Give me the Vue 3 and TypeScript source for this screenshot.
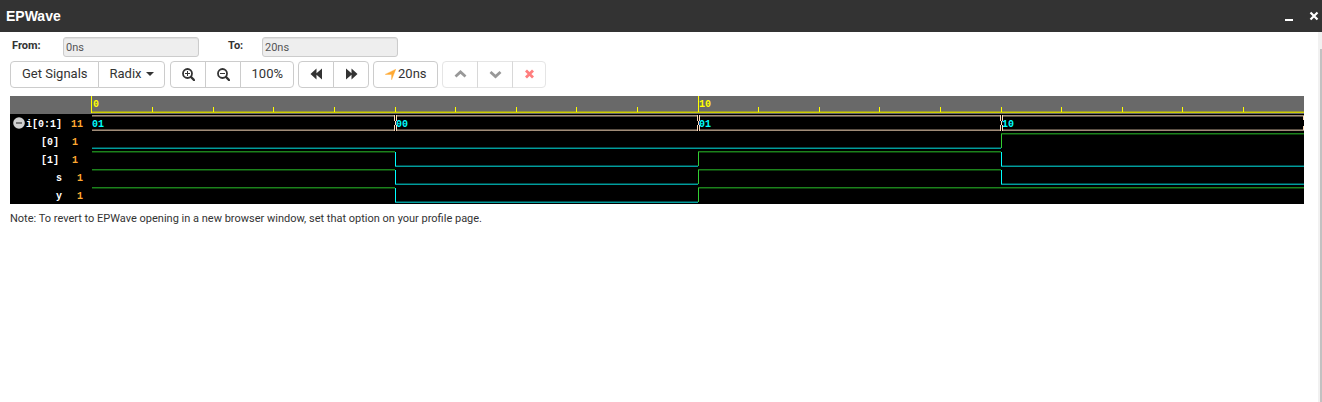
<script setup lang="ts">
import { ref } from 'vue'

interface Signal {
  name: string
  value: string
  nested: boolean
  bus: boolean
  levels: number[]
}

const from = ref('0ns')
const to = ref('20ns')

const ROW = 18
const RULER = 18

const signals: Signal[] = [
  { name: 'i[0:1]', value: '11', nested: false, bus: true, levels: [] },
  { name: '[0]', value: '1', nested: true, bus: false, levels: [0, 0, 0, 1] },
  { name: '[1]', value: '1', nested: true, bus: false, levels: [1, 0, 1, 0] },
  { name: 's', value: '1', nested: false, bus: false, levels: [1, 0, 1, 0] },
  { name: 'y', value: '1', nested: false, bus: false, levels: [1, 0, 1, 1] },
]
const busValues = ['01', '00', '01', '10']
const ticks = Array.from({ length: 19 }, (_, i) => i + 1).filter((t) => t !== 10)

const pct = (n: number) => `${n}%`
const top = (row: number) => RULER + row * ROW
const levelY = (row: number, level: number) => top(row) + (level ? 1 : 16)
const lineClass = (level: number) => (level ? 'high' : 'low')
</script>

<template>
  <div class="window">
    <header class="titlebar">
      <h1>EPWave</h1>
      <div class="controls">
        <button type="button" aria-label="Minimize">
          <svg width="10" height="12" viewBox="0 0 10 12"><path d="M1 10h8" stroke="#fff" stroke-width="2" /></svg>
        </button>
        <button type="button" aria-label="Close">
          <svg width="10" height="12" viewBox="0 0 10 12"><path d="M1.5 2.5l7 7M8.5 2.5l-7 7" stroke="#fff" stroke-width="2.2" /></svg>
        </button>
      </div>
    </header>

    <div class="body">
      <main class="content">
        <form class="range" @submit.prevent>
          <label for="from">From:</label>
          <input id="from" v-model="from" type="text" readonly />
          <label for="to">To:</label>
          <input id="to" v-model="to" type="text" readonly />
        </form>

        <div class="toolbar">
          <div class="group">
            <button type="button">Get Signals</button>
            <button type="button">Radix<span class="caret"></span></button>
          </div>
          <div class="group">
            <button type="button" aria-label="Zoom in">
              <svg width="13" height="13" viewBox="0 0 13 13" fill="none" stroke="#333">
                <circle cx="5.5" cy="5.5" r="4.5" stroke-width="1.8" />
                <path d="M9 9l3 3" stroke-width="2.4" stroke-linecap="round" />
                <path d="M3 5.5h5M5.5 3v5" stroke-width="1" />
              </svg>
            </button>
            <button type="button" aria-label="Zoom out">
              <svg width="13" height="13" viewBox="0 0 13 13" fill="none" stroke="#333">
                <circle cx="5.5" cy="5.5" r="4.5" stroke-width="1.8" />
                <path d="M9 9l3 3" stroke-width="2.4" stroke-linecap="round" />
                <path d="M3 5.5h5" stroke-width="1" />
              </svg>
            </button>
            <button type="button">100%</button>
          </div>
          <div class="group">
            <button type="button" aria-label="Step back">
              <svg width="13" height="12" viewBox="0 0 13 12" fill="#333"><path d="M6.5 0.5v4.7L12 0.5v11L6.5 6.8v4.7L0.5 6z" /></svg>
            </button>
            <button type="button" aria-label="Step forward">
              <svg width="13" height="12" viewBox="0 0 13 12" fill="#333"><path d="M6.5 0.5v4.7L1 0.5v11l5.5-4.7v4.7L12.5 6z" /></svg>
            </button>
          </div>
          <div class="group">
            <button type="button">
              <svg class="arrow" width="11" height="11" viewBox="0 0 11 11" fill="#ffa931"><path d="M10.8 0.2L6.6 10.8V5.4H0.2z" stroke="#ffa931" stroke-width="0.4" /></svg>
              <span>20ns</span>
            </button>
          </div>
          <div class="group">
            <button type="button" disabled aria-label="Move up">
              <svg width="13" height="12" viewBox="0 0 13 12" fill="none" stroke="#333" stroke-width="2.8"><path d="M1.5 8.5l5-4.5 5 4.5" /></svg>
            </button>
            <button type="button" disabled aria-label="Move down">
              <svg width="13" height="12" viewBox="0 0 13 12" fill="none" stroke="#333" stroke-width="2.8"><path d="M1.5 4l5 4.5 5-4.5" /></svg>
            </button>
            <button type="button" disabled aria-label="Remove">
              <svg width="9" height="12" viewBox="0 0 9 12" fill="none" stroke="#f00" stroke-width="2.8"><path d="M1 2.5l7 7M8 2.5l-7 7" /></svg>
            </button>
          </div>
        </div>

        <section class="viewer" aria-label="Waveforms">
          <ul class="names">
            <li v-for="s in signals" :key="s.name" :class="{ nested: s.nested }">
              <button v-if="s.bus" type="button" class="collapse" aria-label="Collapse bus">
                <svg width="12" height="12" viewBox="0 0 12 12"><circle cx="6" cy="6" r="5.8" fill="#d0d0d0" /><path d="M3 6h6" stroke="#777" stroke-width="2" /></svg>
              </button>
              <span class="name">{{ s.name }}</span>
              <span class="value">{{ s.value }}</span>
            </li>
          </ul>
          <svg class="waves" width="100%" height="108" shape-rendering="crispEdges">
            <line x1="0" x2="100%" y1="16.5" y2="16.5" class="axis" />
            <line x1="0" x2="100%" y1="15.5" y2="15.5" class="axis-dim" />
            <line v-for="t in ticks" :key="t" :x1="pct(t * 5)" :x2="pct(t * 5)" y1="11" y2="16" class="tick" />
            <line x1="-0.5" x2="-0.5" y1="0" y2="17" class="tick" />
            <line x1="50%" x2="50%" y1="0" y2="16" class="tick" />
            <svg x="0" overflow="visible"><text x="1" y="11" class="time">0</text></svg>
            <svg x="50%" overflow="visible"><text x="1" y="11" class="time">10</text></svg>

            <line x1="0" x2="100%" y1="19.5" y2="19.5" class="bus" />
            <line x1="0" x2="100%" y1="20.5" y2="20.5" class="bus-dim" />
            <line x1="0" x2="100%" y1="34.5" y2="34.5" class="bus" />
            <line x1="0" x2="100%" y1="33.5" y2="33.5" class="bus-dim" />
            <svg v-for="(v, i) in busValues" :key="i" :x="pct(i * 25)" overflow="visible">
              <g v-if="i > 0" class="cross">
                <rect x="-1" y="19" width="3" height="16" class="gap" />
                <path d="M-0.5 19v4l1 4-1 4v4M1.5 19v4l-1 4 1 4v4" />
              </g>
              <text :x="i > 0 ? 1 : 0" y="31" class="data">{{ v }}</text>
            </svg>
            <svg x="100%" overflow="visible"><path d="M-0.5 20v4M-0.5 30v4" class="edge" /></svg>

            <template v-for="(s, r) in signals" :key="s.name">
              <template v-for="(l, i) in s.levels" :key="i">
                <line
                  :x1="pct(i * 25)" :x2="pct(i * 25 + 25)"
                  :y1="levelY(r, l) + 0.5" :y2="levelY(r, l) + 0.5" :class="lineClass(l)"
                />
                <line
                  :x1="pct(i * 25)" :x2="pct(i * 25 + 25)"
                  :y1="levelY(r, l) + (l ? 1.5 : -0.5)" :y2="levelY(r, l) + (l ? 1.5 : -0.5)"
                  :class="lineClass(l) + '-dim'"
                />
                <line
                  v-if="i > 0 && s.levels[i - 1] !== l"
                  :x1="pct(i * 25)" :x2="pct(i * 25)" :y1="top(r) + 2" :y2="top(r) + 16"
                  :class="l ? 'rise' : 'fall'"
                />
              </template>
            </template>
          </svg>
        </section>

        <p class="note">Note: To revert to EPWave opening in a new browser window, set that option on your profile page.</p>
      </main>
      <div class="scrollbar"><div class="thumb"></div></div>
    </div>
  </div>
</template>

<style>
body {
  background: #fff;
}
</style>

<style scoped>
.window {
  min-height: 100vh;
  display: flex;
  flex-direction: column;
  font-family: Roboto, "Liberation Sans", Arial, sans-serif;
  color: #333;
  overflow: hidden;
}
.window * {
  box-sizing: border-box;
}
.titlebar {
  height: 32px;
  background: #333;
  color: #fff;
  display: flex;
  align-items: center;
  justify-content: space-between;
  padding: 0 3px 0 6px;
}
h1 {
  margin: 0;
  font-family: "Liberation Sans", Arial, sans-serif;
  font-size: 14px;
  line-height: 20px;
}
.controls {
  display: flex;
  gap: 15px;
}
.controls button,
.collapse {
  background: none;
  border: 0;
  padding: 0;
  display: flex;
}
.body {
  flex: 1;
  display: flex;
}
.content {
  flex: 1;
  min-width: 0;
  padding: 5px 14px 0 10px;
}
.range {
  display: grid;
  grid-template-columns: 51px 165px 34px 136px;
  padding-left: 2px;
  font-size: 11px;
}
.range label {
  font-weight: bold;
  line-height: 18px;
}
.range input {
  width: 136px;
  height: 20px;
  border: 1px solid #ccc;
  border-radius: 3px;
  background: #eee;
  color: #555;
  font: inherit;
  padding: 0 2px;
  box-shadow: inset 0 1px 1px rgba(0, 0, 0, 0.075);
  outline: none;
}
.toolbar {
  display: flex;
  gap: 4px;
  margin-top: 4px;
}
.group {
  display: flex;
}
.group:first-child {
  margin-right: 1px;
}
.group button {
  height: 27px;
  min-width: 34px;
  padding: 0 10px 1px 11px;
  display: flex;
  align-items: center;
  justify-content: center;
  background: #fff;
  border: 1px solid #ccc;
  color: #333;
  font-family: inherit;
  font-size: 13px;
  line-height: 18px;
}
.group button + button {
  margin-left: -1px;
}
.group button:first-child {
  border-top-left-radius: 4px;
  border-bottom-left-radius: 4px;
}
.group button:last-child {
  border-top-right-radius: 4px;
  border-bottom-right-radius: 4px;
}
.group button:disabled {
  opacity: 0.5;
}
.caret {
  margin-left: 4px;
  border: 4px solid transparent;
  border-top-color: #333;
  border-bottom: 0;
}
.arrow {
  margin-right: 2px;
}
.viewer {
  margin-top: 8px;
  display: grid;
  grid-template-columns: 82px 1fr;
  background: linear-gradient(#696969 18px, #000 18px);
}
.names {
  list-style: none;
  margin: 0;
  padding: 18px 0 0;
  font: bold 10px/22px "Liberation Mono", "Courier New", monospace;
  color: #fff;
}
.names li {
  height: 18px;
  display: grid;
  grid-template-columns: 13px 36px 21px;
  padding-left: 3px;
}
.names .nested {
  grid-template-columns: 13px 36px 19px;
  padding-left: 0;
}
.name {
  grid-column: 2;
  text-align: right;
}
.value {
  grid-column: 3;
  text-align: right;
  color: #ffa931;
}
.collapse {
  margin-top: 3px;
}
.waves {
  display: block;
  overflow: visible;
  font: bold 10px "Liberation Mono", "Courier New", monospace;
}
.axis { stroke: #cdcd00; }
.axis-dim { stroke: #9a9a34; }
.tick { stroke: #ff0; }
.time { fill: #ff0; }
.data { fill: #0ff; }
.bus { stroke: #a08c78; }
.bus-dim { stroke: #5a4f44; }
.gap { fill: #000; }
.cross path { fill: none; stroke: #ffdab9; }
.edge { stroke: #ffdab9; }
.high { stroke: #1c821c; }
.high-dim { stroke: #0c400c; }
.low { stroke: #009c9c; }
.low-dim { stroke: #004a4a; }
.rise { stroke: #32cd32; }
.fall { stroke: #0ff; }
.note {
  margin: 7px 0 0;
  font-size: 11px;
  line-height: 16px;
}
.scrollbar {
  width: 4px;
  padding: 17px 0 0 2px;
  background: #f1f1f1;
  display: flex;
}
.thumb {
  flex: 1;
  background: #c1c1c1;
}
</style>
